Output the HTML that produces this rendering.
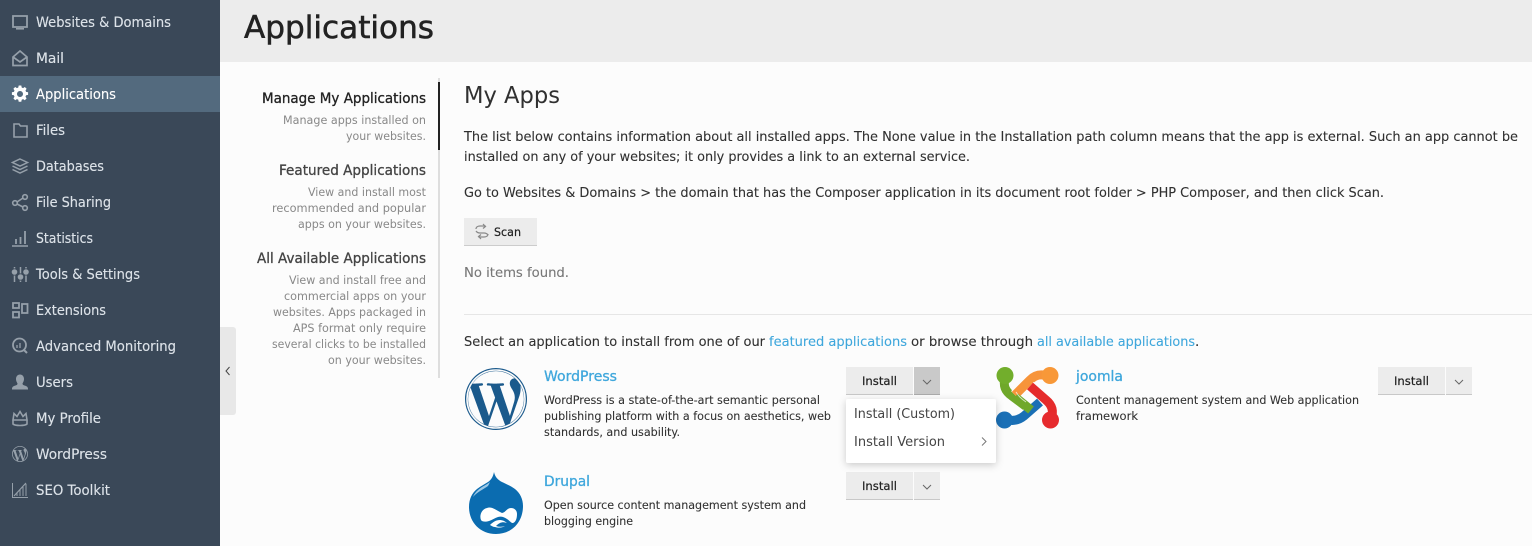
<!DOCTYPE html>
<html><head><meta charset="utf-8"><title>Applications</title>
<style>
html,body{margin:0;padding:0;width:1532px;height:546px;overflow:hidden;background:#fcfcfc}
svg{display:block}
text{font-family:"DejaVu Sans","Liberation Sans",sans-serif}
.n text{font-size:13.8px;fill:#dde3e9;stroke:#dde3e9;stroke-width:.12}
.h{font-size:13.8px;fill:#444;stroke:#444;stroke-width:.3}
.d{font-size:11.8px;fill:#888}
.b{font-size:13.7px;fill:#303030;stroke:#303030;stroke-width:.1}
.s{font-size:11.8px;fill:#303030;stroke:#303030;stroke-width:.08}
.l{font-size:14px;fill:#3fa7dc;stroke:#3fa7dc;stroke-width:.3}
.t{font-size:11.8px;fill:#222;stroke:#222;stroke-width:.2}
.i{fill:none;stroke:#96a0aa;stroke-width:1.6}
</style></head><body>
<svg width="1532" height="546" viewBox="0 0 1532 546" xmlns="http://www.w3.org/2000/svg">
<rect width="1532" height="546" fill="#fcfcfc"/>
<rect x="220" width="1312" height="62" fill="#ececec"/>
<rect width="220" height="546" fill="#3a4858"/>
<rect y="76" width="220" height="36" fill="#536a7e"/>
<path d="M220 327h13a3 3 0 0 1 3 3v82a3 3 0 0 1-3 3h-13z" fill="#e8e8e8"/>
<path d="M229.500 367l-3.500 4 3.500 4" fill="none" stroke="#444" stroke-width="1"/>

<g class="n">
<text x="36" y="27" textLength="135" lengthAdjust="spacingAndGlyphs">Websites &amp; Domains</text>
<text x="36" y="63" textLength="28" lengthAdjust="spacingAndGlyphs">Mail</text>
<text x="36" y="99" textLength="80" lengthAdjust="spacingAndGlyphs" style="fill:#fff;stroke:#fff">Applications</text>
<text x="36" y="135" textLength="29" lengthAdjust="spacingAndGlyphs">Files</text>
<text x="36" y="171" textLength="68" lengthAdjust="spacingAndGlyphs">Databases</text>
<text x="36" y="207" textLength="75" lengthAdjust="spacingAndGlyphs">File Sharing</text>
<text x="36" y="243" textLength="57" lengthAdjust="spacingAndGlyphs">Statistics</text>
<text x="36" y="279" textLength="104" lengthAdjust="spacingAndGlyphs">Tools &amp; Settings</text>
<text x="36" y="315" textLength="70" lengthAdjust="spacingAndGlyphs">Extensions</text>
<text x="36" y="351" textLength="140" lengthAdjust="spacingAndGlyphs">Advanced Monitoring</text>
<text x="36" y="387" textLength="37" lengthAdjust="spacingAndGlyphs">Users</text>
<text x="36" y="423" textLength="65" lengthAdjust="spacingAndGlyphs">My Profile</text>
<text x="36" y="459" textLength="71" lengthAdjust="spacingAndGlyphs">WordPress</text>
<text x="36" y="495" textLength="74" lengthAdjust="spacingAndGlyphs">SEO Toolkit</text>
</g>

<!-- sidebar icons -->
<g class="i">
<path d="M13 16h14v11H13z" stroke-width="1.800"/><path d="M16 28.800h8" stroke-width="1.600"/>
<path d="M13 57l7-6 7 6v8.500H13zM13 57l7 5 7-5" stroke-width="1.700"/>
<path d="M14 124h5l1.500 2H27v11H14z" stroke-width="1.600"/>
<path d="M20 159l7.500 3.500L20 166l-7.500-3.500zM12.500 166l7.500 3.500 7.500-3.500M12.500 169.500l7.500 3.500 7.500-3.500" stroke-width="1.500"/>
<circle cx="15" cy="203" r="2.300"/><circle cx="25" cy="197" r="2.300"/><circle cx="25" cy="208" r="2.300"/><path d="M17 202l6-4M17 204l6 3"/>
<path d="M12 246h16" stroke-width="1.500"/><path d="M16 244v-5M20.500 244v-7M25 244v-13" stroke-width="1.800"/>
<path d="M14.500 267v15M20.500 267v15M26 267v15" stroke-width="1.500"/>
<path d="M20 407l7-1v-0" style="display:none"/>
<path d="M13 303h6v5h-6zM13 312h6v5.500h-6zM22 304h5.500v9H22z" stroke-width="1.800"/>
<circle cx="19.500" cy="345" r="6.500" stroke-width="1.800"/><path d="M24 350l3 3" stroke-width="2"/><path d="M17 348v-3M20 348v-5" stroke-width="1.300"/>
<path d="M13 420l1-6.500 3 3 3-5 3 5 3-3 1 6.500zM13 424c2 2 12 2 14 0v-4H13z" stroke-width="1.600"/>
<path d="M12.500 483V497.500H28" stroke-width="1"/>
<path d="M14 496l12-13" stroke-width="1.200"/><path d="M17 496v-3M20 496v-6M23 496v-9M26 496v-12" stroke-width="1"/>
</g>
<g fill="#96a0aa" stroke="#3a4858" stroke-width=".8">
<circle cx="14.500" cy="272" r="3.200"/><circle cx="20.500" cy="277" r="3.200"/><circle cx="26" cy="272" r="3.200"/>
</g>
<path fill="#fff" fill-rule="evenodd" d="M18.700 85.500h2.600l.4 2 1.400.6 1.700-1.100 1.800 1.800-1.100 1.700.6 1.400 2 .4v2.600l-2 .4-.6 1.400 1.100 1.700-1.800 1.800-1.700-1.100-1.400.6-.4 2h-2.600l-.4-2-1.400-.6-1.700 1.100-1.800-1.800 1.100-1.700-.6-1.400-2-.4v-2.600l2-.4.6-1.400-1.100-1.700 1.800-1.800 1.700 1.100 1.400-.6z M20 91a3 3 0 1 0 .01 0z"/>
<path fill="#96a0aa" d="M20 374.500c2.500 0 4 2 4 4.500 0 2-1 3.500-1.500 4.500 0 1 .5 1.500 2 2 2.500.8 3.500 1.500 3.500 3.500v.5H12v-.5c0-2 1-2.700 3.500-3.500 1.500-.5 2-1 2-2-.5-1-1.500-2.500-1.500-4.500 0-2.500 1.500-4.500 4-4.500z"/>
<g transform="translate(12 446) scale(.667)"><path fill="#96a0aa" d="M21.469 6.825c.84 1.537 1.318 3.3 1.318 5.175 0 3.979-2.156 7.456-5.363 9.325l3.295-9.527c.615-1.54.82-2.771.82-3.864 0-.405-.026-.78-.07-1.110m-7.981.105c.647-.03 1.232-.105 1.232-.105.582-.075.514-.93-.067-.899 0 0-1.755.135-2.88.135-1.064 0-2.85-.15-2.85-.15-.585-.03-.661.855-.075.885 0 0 .54.061 1.125.09l1.68 4.605-2.37 7.080L5.354 6.900c.649-.03 1.234-.1 1.234-.1.585-.075.516-.93-.065-.896 0 0-1.746.138-2.874.138-.2 0-.438-.008-.69-.015C4.911 3.150 8.235 1.215 12 1.215c2.809 0 5.365 1.072 7.286 2.833-.046-.003-.091-.009-.141-.009-1.060 0-1.812.923-1.812 1.914 0 .89.513 1.643 1.060 2.531.411.72.89 1.643.89 2.977 0 .915-.354 1.994-.821 3.479l-1.075 3.585-3.900-11.610.001.014zM12 22.784c-1.059 0-2.081-.153-3.048-.437l3.237-9.406 3.315 9.087c.024.053.05.101.078.149-1.120.393-2.325.609-3.582.609M1.211 12c0-1.564.336-3.050.935-4.390L7.290 21.709C3.694 19.960 1.212 16.271 1.211 12M12 0C5.385 0 0 5.385 0 12s5.385 12 12 12 12-5.385 12-12S18.615 0 12 0"/></g>

<!-- header -->
<text x="244" y="38" font-size="31.500" textLength="190" lengthAdjust="spacingAndGlyphs" fill="#222" stroke="#222" stroke-width=".55">Applications</text>

<!-- left nav -->
<rect x="438" y="78" width="2" height="300" fill="#dedede"/>
<rect x="438" y="82" width="2" height="68" fill="#222"/>
<g text-anchor="end">
<text class="h" x="426" y="103" textLength="164" lengthAdjust="spacingAndGlyphs" style="fill:#222;stroke:#222">Manage My Applications</text>
<text class="d" x="426" y="124" textLength="143" lengthAdjust="spacingAndGlyphs">Manage apps installed on</text>
<text class="d" x="426" y="140" textLength="80" lengthAdjust="spacingAndGlyphs">your websites.</text>
<text class="h" x="426" y="175" textLength="147" lengthAdjust="spacingAndGlyphs">Featured Applications</text>
<text class="d" x="426" y="196" textLength="118" lengthAdjust="spacingAndGlyphs">View and install most</text>
<text class="d" x="426" y="212" textLength="154" lengthAdjust="spacingAndGlyphs">recommended and popular</text>
<text class="d" x="426" y="228" textLength="128" lengthAdjust="spacingAndGlyphs">apps on your websites.</text>
<text class="h" x="426" y="263" textLength="169" lengthAdjust="spacingAndGlyphs">All Available Applications</text>
<text class="d" x="426" y="284" textLength="137" lengthAdjust="spacingAndGlyphs">View and install free and</text>
<text class="d" x="426" y="300" textLength="142" lengthAdjust="spacingAndGlyphs">commercial apps on your</text>
<text class="d" x="426" y="316" textLength="153" lengthAdjust="spacingAndGlyphs">websites. Apps packaged in</text>
<text class="d" x="426" y="332" textLength="133" lengthAdjust="spacingAndGlyphs">APS format only require</text>
<text class="d" x="426" y="348" textLength="154" lengthAdjust="spacingAndGlyphs">several clicks to be installed</text>
<text class="d" x="426" y="364" textLength="98" lengthAdjust="spacingAndGlyphs">on your websites.</text>
</g>

<!-- main -->
<text x="464" y="103" font-size="23.500" textLength="96" lengthAdjust="spacingAndGlyphs" fill="#303030">My Apps</text>
<text class="b" x="464" y="141" textLength="1054" lengthAdjust="spacingAndGlyphs">The list below contains information about all installed apps. The None value in the Installation path column means that the app is external. Such an app cannot be</text>
<text class="b" x="464" y="161" textLength="506" lengthAdjust="spacingAndGlyphs">installed on any of your websites; it only provides a link to an external service.</text>
<text class="b" x="464" y="197" textLength="920" lengthAdjust="spacingAndGlyphs">Go to Websites &amp; Domains &gt; the domain that has the Composer application in its document root folder &gt; PHP Composer, and then click Scan.</text>
<rect x="464" y="218" width="73" height="28" fill="#ececec"/><rect x="464" y="245" width="73" height="1" fill="#ccc"/>
<path d="M476 229c0-2 2-3 4-3h5l-2-2M486 226l-3 2.500M488 234c0 2-2 3-4 3h-5l2 2M478 237l3-2.500M476 231c1 1.500 2 2 4 2h4c2 0 3 .5 4 2" fill="none" stroke="#888" stroke-width="1.200"/>
<text class="t" x="494" y="236" textLength="27" lengthAdjust="spacingAndGlyphs">Scan</text>
<text class="b" x="464" y="277" textLength="105" lengthAdjust="spacingAndGlyphs" style="fill:#777;stroke:#777">No items found.</text>
<rect x="464" y="314" width="1068" height="1" fill="#e6e6e6"/>
<text class="b" x="464" y="346" textLength="301" lengthAdjust="spacingAndGlyphs">Select an application to install from one of our</text>
<text class="b" x="769" y="346" textLength="138" lengthAdjust="spacingAndGlyphs" style="fill:#3fa7dc;stroke:#3fa7dc">featured applications</text>
<text class="b" x="911" y="346" textLength="122" lengthAdjust="spacingAndGlyphs">or browse through</text>
<text class="b" x="1037" y="346" textLength="158" lengthAdjust="spacingAndGlyphs" style="fill:#3fa7dc;stroke:#3fa7dc">all available applications</text>
<text class="b" x="1195" y="346">.</text>

<!-- WordPress -->
<g transform="translate(465 368) scale(2.583)"><path fill="#1b5a8c" d="M21.469 6.825c.84 1.537 1.318 3.300 1.318 5.175 0 3.979-2.156 7.456-5.363 9.325l3.295-9.527c.615-1.540.82-2.771.82-3.864 0-.405-.026-.78-.07-1.110m-7.981.105c.647-.03 1.232-.105 1.232-.105.582-.075.514-.93-.067-.899 0 0-1.755.135-2.880.135-1.064 0-2.850-.15-2.850-.15-.585-.03-.661.855-.075.885 0 0 .54.061 1.125.09l1.680 4.605-2.370 7.080L5.354 6.900c.649-.03 1.234-.1 1.234-.1.585-.075.516-.93-.065-.896 0 0-1.746.138-2.874.138-.2 0-.438-.008-.69-.015C4.911 3.150 8.235 1.215 12 1.215c2.809 0 5.365 1.072 7.286 2.833-.046-.003-.091-.009-.141-.009-1.060 0-1.812.923-1.812 1.914 0 .89.513 1.643 1.060 2.531.411.72.89 1.643.89 2.977 0 .915-.354 1.994-.821 3.479l-1.075 3.585-3.900-11.610.001.014zM12 22.784c-1.059 0-2.081-.153-3.048-.437l3.237-9.406 3.315 9.087c.024.053.05.101.078.149-1.120.393-2.325.609-3.582.609M1.211 12c0-1.564.336-3.050.935-4.390L7.290 21.709C3.694 19.960 1.212 16.271 1.211 12M12 0C5.385 0 0 5.385 0 12s5.385 12 12 12 12-5.385 12-12S18.615 0 12 0"/></g>
<circle cx="496" cy="399" r="29" fill="none" stroke="#fcfcfc" stroke-width="1.600"/>
<text class="l" x="544" y="381" textLength="73" lengthAdjust="spacingAndGlyphs">WordPress</text>
<text class="s" x="544" y="404" textLength="276" lengthAdjust="spacingAndGlyphs">WordPress is a state-of-the-art semantic personal</text>
<text class="s" x="544" y="420" textLength="287" lengthAdjust="spacingAndGlyphs">publishing platform with a focus on aesthetics, web</text>
<text class="s" x="544" y="436" textLength="136" lengthAdjust="spacingAndGlyphs">standards, and usability.</text>

<!-- Install buttons -->
<g>
<rect x="846" y="367" width="67" height="28" fill="#ececec"/><rect x="846" y="394" width="67" height="1" fill="#c8c8c8"/>
<rect x="914" y="367" width="26" height="28" fill="#c9c9c9"/><rect x="914" y="394" width="26" height="1" fill="#aaa"/>
<text class="t" x="862" y="385" textLength="35" lengthAdjust="spacingAndGlyphs">Install</text>
<path d="M923 380l4 4 4-4" fill="none" stroke="#666"/>
<rect x="846" y="472" width="67" height="28" fill="#ececec"/><rect x="846" y="499" width="67" height="1" fill="#c8c8c8"/>
<rect x="914" y="472" width="26" height="28" fill="#ececec"/><rect x="914" y="499" width="26" height="1" fill="#c8c8c8"/>
<text class="t" x="862" y="490" textLength="35" lengthAdjust="spacingAndGlyphs">Install</text>
<path d="M923 485l4 4 4-4" fill="none" stroke="#666"/>
<rect x="1378" y="367" width="67" height="28" fill="#ececec"/><rect x="1378" y="394" width="67" height="1" fill="#c8c8c8"/>
<rect x="1446" y="367" width="26" height="28" fill="#ececec"/><rect x="1446" y="394" width="26" height="1" fill="#c8c8c8"/>
<text class="t" x="1394" y="385" textLength="35" lengthAdjust="spacingAndGlyphs">Install</text>
<path d="M1455 380l4 4 4-4" fill="none" stroke="#666"/>
</g>

<!-- Joomla -->
<g fill="none" stroke-linejoin="round">
<path d="M1005 377c-2 9 0 14 7 19l20 15" stroke="#6fa82a" stroke-width="9"/>
<path d="M1050 377c-9-4-15-2-20 3l-15 15" stroke="#fcfcfc" stroke-width="11"/>
<path d="M1050 377c-9-4-15-2-20 3l-15 15" stroke="#f7943a" stroke-width="9"/>
<path d="M1051 419c3-8 1-14-5-19l-16-14" stroke="#fcfcfc" stroke-width="11"/>
<path d="M1051 419c3-8 1-14-5-19l-16-14" stroke="#e52b2b" stroke-width="9"/>
<path d="M1005 419c8 3 14 1 19-3l16-14" stroke="#fcfcfc" stroke-width="11"/>
<path d="M1005 419c8 3 14 1 19-3l16-14" stroke="#1a6fb5" stroke-width="9"/>
<path d="M1015 397l16 13" stroke="#6fa82a" stroke-width="9"/>
<path d="M1016 392c2 3 4 6 10 10" stroke="#fff" stroke-width="1" opacity=".7"/>
</g>
<circle cx="1005" cy="375.500" r="8.500" fill="#72ae2c"/>
<circle cx="1050" cy="375.500" r="8.500" fill="#f89838"/>
<circle cx="1004.500" cy="420" r="8.500" fill="#1b70b6"/>
<circle cx="1050.500" cy="420" r="8.500" fill="#e62b2e"/>
<text class="l" x="1076" y="381" textLength="47" lengthAdjust="spacingAndGlyphs">joomla</text>
<text class="s" x="1076" y="404" textLength="283" lengthAdjust="spacingAndGlyphs">Content management system and Web application</text>
<text class="s" x="1076" y="420" textLength="62" lengthAdjust="spacingAndGlyphs">framework</text>

<!-- Dropdown -->
<defs><filter id="sh" x="-20%" y="-30%" width="140%" height="170%"><feDropShadow dx="0" dy="2" stdDeviation="4" flood-color="#000" flood-opacity=".2"/></filter></defs>
<rect x="846" y="399" width="150" height="64" rx="2" fill="#fff" filter="url(#sh)"/>
<text x="854" y="418" font-size="13.700" textLength="101" lengthAdjust="spacingAndGlyphs" fill="#444">Install (Custom)</text>
<text x="854" y="446" font-size="13.700" textLength="91" lengthAdjust="spacingAndGlyphs" fill="#444">Install Version</text>
<path d="M982 437.500l4 4-4 4" fill="none" stroke="#777"/>

<!-- Drupal -->
<path d="M494 472c1 5 4 8 8 10 4 2 9 4 13 7 5 4 8 10 8 17 0 16-11 28-27 28s-27-12-27-27c0-8 3-14 8-18 4-3 8-5 11-7 3-2 5-5 6-10z" fill="#0b6cb0"/>
<path d="M490 482c-5 4-13 6-17 15 4-5 11-8 15-11z" fill="#9cc8e6"/>
<path d="M481 520c-2-5 1-11 6-12 5-2 10 3 15 5 3 0 5-5 9-5 4 0 6 3 6 6 0 4-1 8-4 9-2 0-3-2-6-4-3-2-6-3-9-2-3 1-6 3-9 4-3 1-7 1-8-1z" fill="#fff"/>
<path d="M490 525c3-3 6-5 10-5 3 0 6 2 7 3-3-1-5-1-7 0-2 1-3 2-4 3 3 1 6 1 9 0-3 2-7 2-10 1-2 0-3-1-5-2z" fill="#fff"/>
<text class="l" x="544" y="486" textLength="46" lengthAdjust="spacingAndGlyphs">Drupal</text>
<text class="s" x="544" y="509" textLength="262" lengthAdjust="spacingAndGlyphs">Open source content management system and</text>
<text class="s" x="544" y="525" textLength="89" lengthAdjust="spacingAndGlyphs">blogging engine</text>
</svg>
</body></html>
